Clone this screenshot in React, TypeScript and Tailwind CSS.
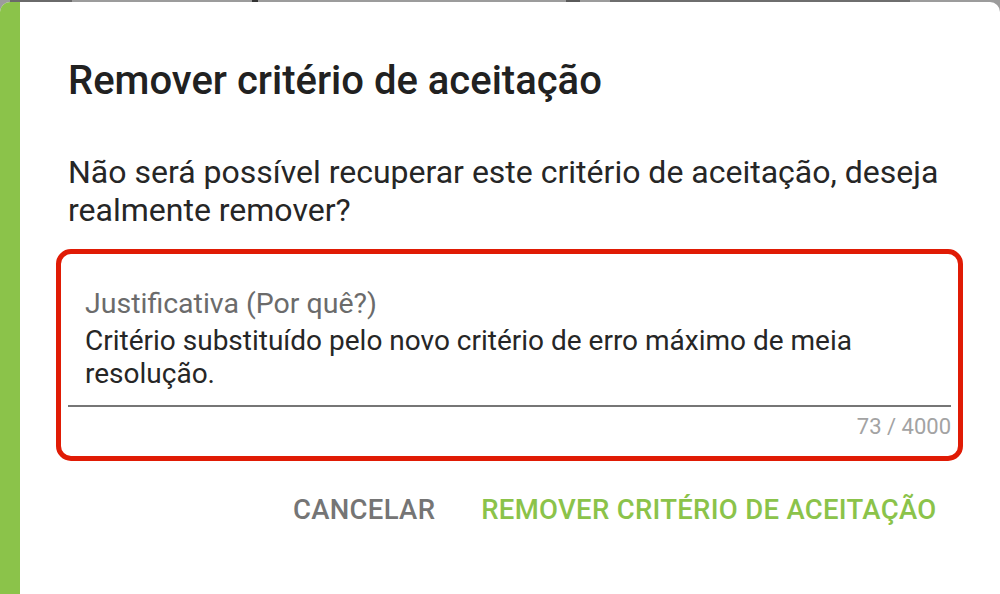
import React from "react";

export default function App() {
  return (
    <div
      className="w-[1000px] h-[594px] overflow-hidden bg-[#9c9c9c] flex flex-col"
      style={{ fontFamily: "Roboto, 'Liberation Sans', sans-serif" }}
    >
      {/* backdrop strip with fragments of page text */}
      <div className="h-[2px] shrink-0 flex items-start">
        <div className="ml-[10px] w-[62px] h-[2px] bg-[#6a6a6a]" />
        <div className="ml-[180px] w-[6px] h-[2px] bg-[#333]" />
        <div className="ml-[308px] w-[14px] h-[2px] bg-[#5a5a5a]" />
        <div className="ml-[30px] w-[300px] h-[2px] bg-[#6e6e6e]" />
      </div>
      <div className="flex-1 flex bg-white rounded-[10px] overflow-hidden mb-[-10px]">
        <div className="w-[20px] shrink-0 bg-[#8bc34a]" />
        <div className="flex-1 flex flex-col pl-[48px] pr-[49px] pt-[57.4px]">
          <h1 className="text-[40px] leading-[44px] font-medium text-[#212121]">
            Remover critério de aceitação
          </h1>
          <p className="mt-[49.5px] text-[32px] leading-[38px] text-[#262626]">
            Não será possível recuperar este critério de aceitação, deseja realmente remover?
          </p>
          <div className="mt-[20px] -mx-[12px] border-[5px] border-[#e01b05] rounded-[15px] px-[7px] pt-[32.4px] pb-[16px]">
            <div className="px-[17px]">
              <div className="text-[28.5px] leading-[36px] text-[#6b6b6b]">Justificativa (Por quê?)</div>
              <div className="mt-[1.6px] text-[28px] leading-[33px] text-[#262626]">
                Critério substituído pelo novo critério de erro máximo de meia resolução.
              </div>
            </div>
            <div className="mt-[15px] h-[2px] bg-[#767676]" />
            <div className="mt-[7px] text-right text-[22px] leading-[26px] text-[#a3a3a3]">73 / 4000</div>
          </div>
          <div className="mt-[31px] flex justify-end items-center gap-[46px] pr-[14.5px]">
            <button className="text-[27.5px] leading-[36px] font-medium text-[#757575] tracking-[0.3px]">
              CANCELAR
            </button>
            <button className="text-[27.5px] leading-[36px] font-medium text-[#8bc34a] tracking-[0.3px]">
              REMOVER CRITÉRIO DE ACEITAÇÃO
            </button>
          </div>
        </div>
      </div>
    </div>
  );
}
